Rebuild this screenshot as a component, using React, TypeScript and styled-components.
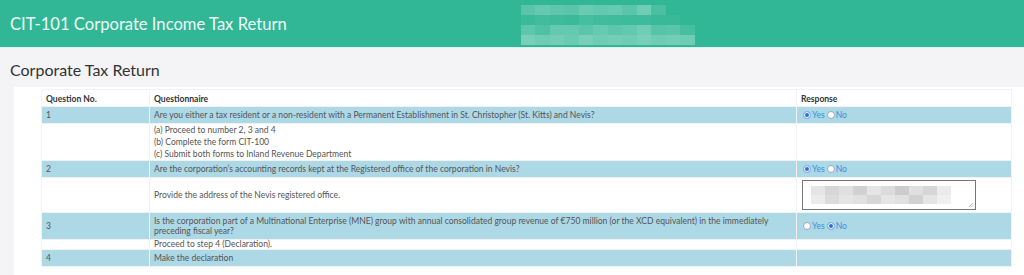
import styled, { createGlobalStyle } from 'styled-components';

const GlobalStyle = createGlobalStyle`
  body {
    margin: 0;
    background: #f4f4f6;
    font-family: Lato, "Noto Sans", sans-serif;
  }
`;

const Header = styled.header`
  height: 47px;
  background: #31b796;
  border-bottom: 1px solid #d9f4ee;
  display: flex;
  align-items: center;
  padding-left: 10px;
`;

const Title = styled.h1`
  margin: 0;
  font-size: 16.6px;
  font-weight: 400;
  color: #eefaf7;
`;

// pixelated (redacted) block in the header
const Mosaic = styled.div`
  margin-left: 234px;
  margin-top: 2px;
  display: grid;
  grid-template-columns: repeat(12, 14.5px);
  grid-auto-rows: 10px;
  filter: blur(0.6px);
`;

const Tile = styled.div<{ $o: number }>`
  background: rgba(255, 255, 255, ${p => p.$o});
`;

const PageTitle = styled.h2`
  margin: 0;
  padding: 12px 10px 8px;
  font-size: 16px;
  font-weight: 400;
  color: #333;
`;

const Panel = styled.div`
  background: #fff;
  margin-left: 14px;
  padding: 2px 12px 10px 27px;
`;

const Table = styled.table`
  width: 100%;
  border-collapse: collapse;
  table-layout: fixed;
  font-size: 8.55px;
  color: #555;
`;

const Th = styled.th<{ $w?: number }>`
  text-align: left;
  font-weight: 700;
  color: #333;
  padding: 4px 4px 2px;
  line-height: 10px;
  border: 1px solid #f2f2f2;
  ${p => (p.$w ? `width: ${p.$w}px;` : '')}
`;

const Tr = styled.tr<{ $q?: boolean }>`
  background: ${p => (p.$q ? '#add8e6' : '#fff')};
`;

const Td = styled.td<{ $q?: boolean; $tight?: boolean }>`
  border: 1px solid #f2f2f2;
  vertical-align: ${p => (p.$q ? 'middle' : 'top')};
  padding: ${p => (p.$q ? '3px 4px' : '0 4px')};
  line-height: ${p => (p.$tight ? '9px' : p.$q ? '10px' : '12px')};
`;

const MidTd = styled(Td)`
  vertical-align: middle;
`;

const RadioGroup = styled.div`
  display: flex;
  align-items: center;
  gap: 2px;
  padding-left: 2px;
  color: #3593dc;
`;

const Opt = styled.label`
  display: inline-flex;
  align-items: center;
`;

const Dot = styled.span<{ $on?: boolean }>`
  display: inline-block;
  width: 8px;
  height: 8px;
  border-radius: 50%;
  box-sizing: border-box;
  margin-right: 1px;
  background: ${p => (p.$on ? '#2a6fd6' : '#fff')};
  border: ${p => (p.$on ? '1.5px solid #8fb8f0' : '1px solid #9ab')};
  box-shadow: ${p => (p.$on ? 'inset 0 0 0 1px #fff' : 'none')};
`;

const AddressBox = styled.div`
  position: relative;
  width: 174px;
  height: 30px;
  margin: 2px 0 2px 1px;
  border: 1px solid #777;
  box-sizing: border-box;
  padding: 5px 8px;
  display: grid;
  grid-template-columns: repeat(10, 14px);
  grid-auto-rows: 9px;
  filter: blur(0.5px);
`;

const GrayTile = styled.div<{ $o: number }>`
  background: rgba(0, 0, 0, ${p => p.$o});
`;

const Grip = styled.svg`
  position: absolute;
  right: 1px;
  bottom: 1px;
`;

const headerTiles = [
  0.2, 0.25, 0.22, 0.2, 0.28, 0.24, 0.26, 0.2, 0.3, 0.12, 0, 0,
  0.05, 0.08, 0.06, 0.05, 0.1, 0.08, 0.07, 0.06, 0.06, 0.04, 0.04, 0,
  0.22, 0.15, 0.25, 0.25, 0.2, 0.26, 0.22, 0.24, 0.3, 0.18, 0.2, 0.1,
  0.35, 0.3, 0.32, 0.28, 0.35, 0.3, 0.32, 0.3, 0.35, 0.3, 0.32, 0.3,
];

const boxTiles = [
  0.1, 0.16, 0.12, 0.18, 0.1, 0.14, 0.2, 0.12, 0.16, 0.08,
  0.08, 0.14, 0.1, 0.12, 0.16, 0.1, 0.12, 0.18, 0.1, 0.06,
];

function YesNo({ yes }: { yes: boolean }) {
  return (
    <RadioGroup>
      <Opt>
        <Dot $on={yes} />
        Yes
      </Opt>
      <Opt>
        <Dot $on={!yes} />
        No
      </Opt>
    </RadioGroup>
  );
}

export default function App() {
  return (
    <>
      <GlobalStyle />
      <Header>
        <Title>CIT-101 Corporate Income Tax Return</Title>
        <Mosaic>
          {headerTiles.map((o, i) => (
            <Tile key={i} $o={o} />
          ))}
        </Mosaic>
      </Header>
      <PageTitle>Corporate Tax Return</PageTitle>
      <Panel>
        <Table>
          <thead>
            <tr>
              <Th $w={99}>Question No.</Th>
              <Th>Questionnaire</Th>
              <Th $w={206}>Response</Th>
            </tr>
          </thead>
          <tbody>
            <Tr $q>
              <Td $q>1</Td>
              <Td $q>
                Are you either a tax resident or a non-resident with a Permanent Establishment in St.
                Christopher (St. Kitts) and Nevis?
              </Td>
              <Td $q>
                <YesNo yes />
              </Td>
            </Tr>
            <Tr>
              <Td />
              <Td>
                (a) Proceed to number 2, 3 and 4
                <br />
                (b) Complete the form CIT-100
                <br />
                (c) Submit both forms to Inland Revenue Department
              </Td>
              <Td />
            </Tr>
            <Tr $q>
              <Td $q>2</Td>
              <Td $q>
                Are the corporation’s accounting records kept at the Registered office of the
                corporation in Nevis?
              </Td>
              <Td $q>
                <YesNo yes />
              </Td>
            </Tr>
            <Tr>
              <Td />
              <MidTd>Provide the address of the Nevis registered office.</MidTd>
              <Td $tight>
                <AddressBox>
                  {boxTiles.map((o, i) => (
                    <GrayTile key={i} $o={o} />
                  ))}
                  <Grip width="6" height="6" viewBox="0 0 6 6">
                    <path d="M5 1 L1 5 M5 3.5 L3.5 5" stroke="#999" strokeWidth="0.7" />
                  </Grip>
                </AddressBox>
              </Td>
            </Tr>
            <Tr $q>
              <Td $q>3</Td>
              <Td $q>
                Is the corporation part of a Multinational Enterprise (MNE) group with annual
                consolidated group revenue of €750 million (or the XCD equivalent) in the immediately
                <br />
                preceding fiscal year?
              </Td>
              <Td $q>
                <YesNo yes={false} />
              </Td>
            </Tr>
            <Tr>
              <Td $tight />
              <Td $tight>Proceed to step 4 (Declaration).</Td>
              <Td $tight />
            </Tr>
            <Tr $q>
              <Td $q>4</Td>
              <Td $q>Make the declaration</Td>
              <Td $q />
            </Tr>
          </tbody>
        </Table>
      </Panel>
    </>
  );
}
